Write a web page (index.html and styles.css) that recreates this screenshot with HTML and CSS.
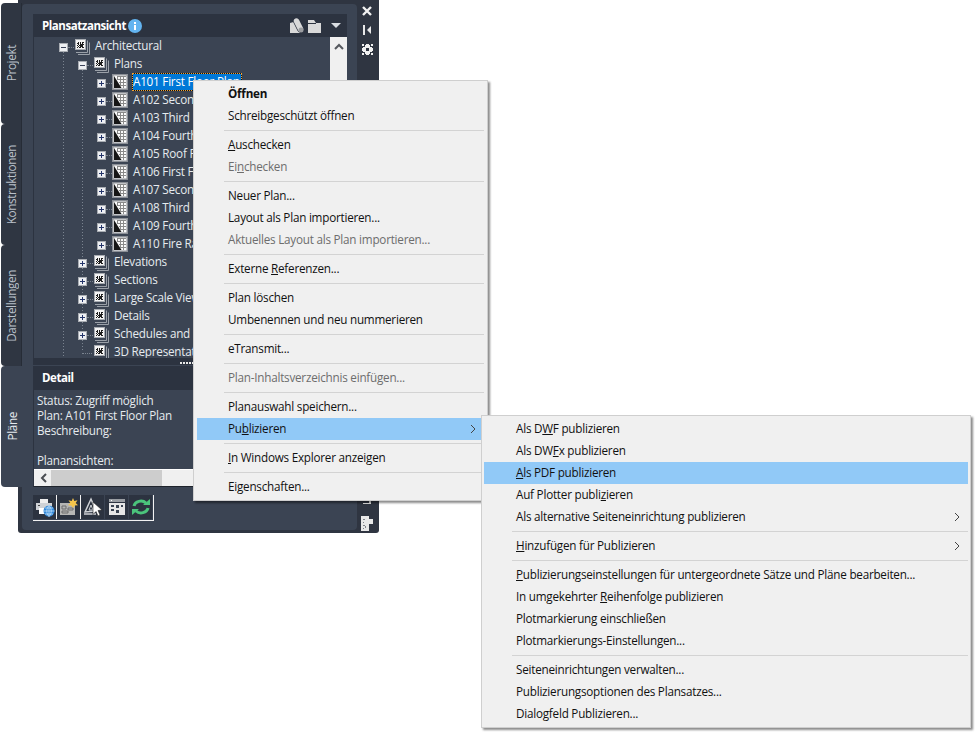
FILE: index.html
```
<!DOCTYPE html>
<html lang="de">
<head>
<meta charset="utf-8">
<title>Plansatzansicht</title>
<link rel="stylesheet" href="styles.css">
</head>
<body>
<svg class="defs" width="0" height="0" aria-hidden="true">
  <symbol id="sheetset" viewBox="0 0 17 16">
    <path d="M13.500 1.500v12H2M15.500 3.500v12H4" fill="none" stroke="#9aa0a8"/>
    <rect x="1.500" y="0.500" width="10" height="10" fill="#f4f4f4" stroke="#a8acb2"/>
    <path d="M4 3h1v1H4zM6 3h1v1H6zM8 3h2v1H8zM3 4h2v1H3zM6 4h1v1H6zM8 4h1v1H8zM4 5h1v1H4zM6 5h4v1H6zM3 6h1v1H3zM5 6h4v1H5zM4 7h1v1H4zM6 7h3v1H6zM8 8h2v1H8zM3 8h1v1H3zM5 8h2v1H5z" fill="#1d1d1d"/>
  </symbol>
  <symbol id="sheet" viewBox="0 0 16 16">
    <rect x="0.750" y="0.750" width="14.500" height="14.500" fill="#fafafa" stroke="#8b8f96" stroke-width="1.500"/>
    <path d="M2 2l7.500 12H2z" fill="#161616"/>
    <path d="M5 2.500h9M5 5.500h9M7 8.500h7M8 11.500h6M5.500 2v4M8.500 2v10M11.500 2v12" fill="none" stroke="#8a8a8a"/>
  </symbol>
</svg>

<div class="palette">
  <div class="tabs">
    <div class="tab"><span>Projekt</span></div>
    <div class="tab"><span>Konstruktionen</span></div>
    <div class="tab"><span>Darstellungen</span></div>
    <div class="tab active"><span>Pläne</span></div>
  </div>
  <div class="frame">
    <div class="inner">
      <div class="titlebar">
        <strong class="title">Plansatzansicht</strong>
        <svg class="info" width="14" height="14" viewBox="0 0 14 14"><circle cx="7" cy="7" r="7" fill="#63b4f0"/><path d="M6 3h2v2H6zM6 6h2v5H6z" fill="#fff"/></svg>
        <span class="spacer"></span>
        <svg class="bar-ico" width="32" height="16" viewBox="0 0 32 16">
          <path d="M0 5l7-2 3 12H0z" fill="#d9d9d9"/>
          <path d="M6.500 3L10.500 11" fill="none" stroke="#2c3340" stroke-width="7" stroke-linecap="round"/>
          <path d="M6.500 3L10.500 11" fill="none" stroke="#d9d9d9" stroke-width="5.500" stroke-linecap="round"/>
          <circle cx="11" cy="12" r="2.500" fill="#9b9da0"/>
          <path d="M18 2h6l2 3h5v10H18z" fill="#d9d9d9"/>
          <path d="M18 5.500h8" stroke="#2c3340"/>
        </svg>
        <svg class="caret" width="10" height="5" viewBox="0 0 10 5"><path d="M0 0h10L5 5z" fill="#d9dde2"/></svg>
      </div>
      <div class="tree">
        <svg class="guides" width="120" height="321" viewBox="0 0 120 321">
          <path d="M29.500 15v306M48.500 33v282" fill="none" stroke="#7b8490" stroke-dasharray="1 2"/>
        </svg>
        <div class="row l0"><span class="toggle minus"></span><svg class="set" width="17" height="16"><use href="#sheetset"/></svg><span class="label">Architectural</span></div>
        <div class="row l1"><span class="toggle minus"></span><svg class="set" width="17" height="16"><use href="#sheetset"/></svg><span class="label">Plans</span></div>
        <div class="row l2"><span class="toggle plus"></span><svg class="doc" width="16" height="16"><use href="#sheet"/></svg><span class="label selected">A101 First Floor Plan</span></div>
        <div class="row l2"><span class="toggle plus"></span><svg class="doc" width="16" height="16"><use href="#sheet"/></svg><span class="label">A102 Second Floor Plan</span></div>
        <div class="row l2"><span class="toggle plus"></span><svg class="doc" width="16" height="16"><use href="#sheet"/></svg><span class="label">A103 Third Floor Plan</span></div>
        <div class="row l2"><span class="toggle plus"></span><svg class="doc" width="16" height="16"><use href="#sheet"/></svg><span class="label">A104 Fourth Floor Plan</span></div>
        <div class="row l2"><span class="toggle plus"></span><svg class="doc" width="16" height="16"><use href="#sheet"/></svg><span class="label">A105 Roof Plan</span></div>
        <div class="row l2"><span class="toggle plus"></span><svg class="doc" width="16" height="16"><use href="#sheet"/></svg><span class="label">A106 First Floor Plan</span></div>
        <div class="row l2"><span class="toggle plus"></span><svg class="doc" width="16" height="16"><use href="#sheet"/></svg><span class="label">A107 Second Floor Plan</span></div>
        <div class="row l2"><span class="toggle plus"></span><svg class="doc" width="16" height="16"><use href="#sheet"/></svg><span class="label">A108 Third Floor Plan</span></div>
        <div class="row l2"><span class="toggle plus"></span><svg class="doc" width="16" height="16"><use href="#sheet"/></svg><span class="label">A109 Fourth Floor Plan</span></div>
        <div class="row l2"><span class="toggle plus"></span><svg class="doc" width="16" height="16"><use href="#sheet"/></svg><span class="label">A110 Fire Rating Plan</span></div>
        <div class="row l1"><span class="toggle plus"></span><svg class="set" width="17" height="16"><use href="#sheetset"/></svg><span class="label">Elevations</span></div>
        <div class="row l1"><span class="toggle plus"></span><svg class="set" width="17" height="16"><use href="#sheetset"/></svg><span class="label">Sections</span></div>
        <div class="row l1"><span class="toggle plus"></span><svg class="set" width="17" height="16"><use href="#sheetset"/></svg><span class="label">Large Scale Views</span></div>
        <div class="row l1"><span class="toggle plus"></span><svg class="set" width="17" height="16"><use href="#sheetset"/></svg><span class="label">Details</span></div>
        <div class="row l1"><span class="toggle plus"></span><svg class="set" width="17" height="16"><use href="#sheetset"/></svg><span class="label">Schedules and Diagrams</span></div>
        <div class="row l1"><span class="toggle none"></span><svg class="set" width="17" height="16"><use href="#sheetset"/></svg><span class="label">3D Representations</span></div>
        <div class="vscroll">
          <svg width="10" height="7" viewBox="0 0 10 7"><path d="M1 6l4-4 4 4" fill="none" stroke="#55585e" stroke-width="2"/></svg>
        </div>
      </div>
      <div class="splitter"><span class="grip"></span></div>
      <div class="titlebar detail-bar"><strong class="title">Detail</strong></div>
      <div class="detail">
        <div class="detail-text">
          <div>Status: Zugriff möglich</div>
          <div>Plan: A101 First Floor Plan</div>
          <div>Beschreibung:</div>
          <div class="blank"></div>
          <div>Planansichten:</div>
        </div>
        <div class="hscroll">
          <svg width="7" height="10" viewBox="0 0 7 10"><path d="M6 1L2 5l4 4" fill="none" stroke="#4a4d52" stroke-width="2"/></svg>
          <span class="thumb"></span>
        </div>
      </div>
      <div class="toolbar">
        <span class="tool"><svg width="20" height="20" viewBox="0 0 20 20">
          <path d="M5 2h8v4H5z" fill="#eee"/><path d="M1 6h16v7H1z" fill="#cfd2d6"/><path d="M4 11h9v6H4z" fill="#fff"/><path d="M3 8h2v1H3z" fill="#444"/>
          <circle cx="14" cy="14" r="5.500" fill="#2f86d8"/><path d="M8.500 14h11M14 8.500v11M10 11h8M10 17h8M14 8.500c-3 3-3 8 0 11M14 8.500c3 3 3 8 0 11" fill="none" stroke="#bfe0fa" stroke-width=".8"/>
        </svg></span>
        <span class="tool"><svg width="20" height="20" viewBox="0 0 20 20">
          <path d="M1 6h15v12H1z" fill="#b6b6b4"/>
          <path d="M3 9h4v3H3zM9 11h5v2H9zM3 14h6v2H3z" fill="none" stroke="#6c6c6c"/>
          <path d="M14 1l1.300 3 3.200-.800-1.800 2.800 2.300 2.300-3.300.200L14 11l-1.700-2.500-3.300-.200 2.300-2.300L9.500 3.200l3.200.800z" fill="#f6c64c"/>
        </svg></span>
        <span class="tool"><svg width="20" height="20" viewBox="0 0 20 20">
          <path d="M2 15L8 2l5 12z" fill="none" stroke="#cfd2d6" stroke-width="1.500"/><path d="M6 13l2-5 2 5z" fill="none" stroke="#cfd2d6"/><path d="M1 17h12" stroke="#cfd2d6" stroke-width="1.500"/>
          <path d="M10 5l9 8-4 .500 2 4.500-2 1-2-4.500-3 3z" fill="#fff" stroke="#222" stroke-width=".6"/>
        </svg></span>
        <span class="tool"><svg width="18" height="18" viewBox="0 0 18 18">
          <path d="M1 1h16v3H1z" fill="#9a9ea3"/><path d="M1 5h16v12H1z" fill="#e6e6e6"/><path d="M3 2h1v1H3z" fill="#fff"/>
          <path d="M3 7h3v2H3zM3 11h3v2H3zM8 7h3v3H8zM8 12h3v3H8zM13 7h2v2h-2z" fill="#3a4351"/>
        </svg></span>
        <span class="tool"><svg width="20" height="20" viewBox="0 0 20 20">
          <path d="M3 9a7 6 0 0 1 12-3" fill="none" stroke="#4bc47c" stroke-width="3"/><path d="M12 8h7V2z" fill="#4bc47c"/>
          <path d="M17 11a7 6 0 0 1-12 3" fill="none" stroke="#4bc47c" stroke-width="3"/><path d="M8 12H1v6z" fill="#4bc47c"/>
        </svg></span>
      </div>
    </div>
    <div class="strip">
      <svg width="10" height="10" viewBox="0 0 10 10"><path d="M1 1l8 8M9 1l-8 8" stroke="#f2f2f2" stroke-width="2.400"/></svg>
      <svg width="10" height="10" viewBox="0 0 10 10"><path d="M1 0h2v10H1zM9 1v8L5 5z" fill="#e8e8e8"/></svg>
      <svg width="11" height="11" viewBox="0 0 11 11"><path d="M3 1h5v9H3zM1 3h9v5H1zM0 0h2v2H0zM9 0h2v2H9zM0 9h2v2H0zM9 9h2v2H9zM4 0h3v1H4zM4 10h3v1H4zM0 4h1v3H0zM10 4h1v3h-1z" fill="#f0f0f0"/><path d="M4 4h3v3H4z" fill="#2f3541"/></svg>
      <span class="spacer"></span>
      <svg class="bottom-a" width="9" height="5" viewBox="0 0 9 5"><path d="M6 0h2v4H0V3h6z" fill="#e8e8e8"/></svg>
      <svg class="bottom-b" width="12" height="15" viewBox="0 0 12 15"><path d="M0 0h8v3h4v5H8v7H0z" fill="#e8e8e8"/><path d="M2 3h2v1H2zM2 6h1v1H2zM2 9h3v1H2zM4 9v3h1V9zM2 12h1v1H2z" fill="#7e8288"/></svg>
    </div>
  </div>
</div>

<div class="menu main-menu">
  <div class="item strong"><span>Öffnen</span></div>
  <div class="item"><span>Schreibgeschützt öffnen</span></div>
  <div class="sep"></div>
  <div class="item"><span><u>A</u>uschecken</span></div>
  <div class="item off"><span>Ei<u>n</u>checken</span></div>
  <div class="sep"></div>
  <div class="item"><span>Neuer Plan...</span></div>
  <div class="item"><span>Layout als Plan importieren...</span></div>
  <div class="item off"><span>Aktuelles Layout als Plan importieren...</span></div>
  <div class="sep"></div>
  <div class="item"><span>Externe <u>R</u>eferenzen...</span></div>
  <div class="sep"></div>
  <div class="item"><span>Plan löschen</span></div>
  <div class="item"><span>Umbenennen und neu nummerieren</span></div>
  <div class="sep"></div>
  <div class="item"><span>eTransmit...</span></div>
  <div class="sep"></div>
  <div class="item off"><span>Plan-Inhaltsverzeichnis einfügen...</span></div>
  <div class="sep"></div>
  <div class="item"><span>Planauswahl speichern...</span></div>
  <div class="item hot"><span>Pu<u>b</u>lizieren</span><svg class="chev" width="6" height="10" viewBox="0 0 6 10"><path d="M1 1l4 4-4 4" fill="none" stroke="#444"/></svg></div>
  <div class="sep"></div>
  <div class="item"><span><u>I</u>n Windows Explorer anzeigen</span></div>
  <div class="sep"></div>
  <div class="item"><span>Eigenschaften...</span></div>
</div>

<div class="menu sub-menu">
  <div class="item"><span>Als D<u>W</u>F publizieren</span></div>
  <div class="item"><span>Als DW<u>F</u>x publizieren</span></div>
  <div class="item hot"><span><u>A</u>ls PDF publizieren</span></div>
  <div class="item"><span>Auf Plotter publi<u>z</u>ieren</span></div>
  <div class="item"><span>Als alternative Seiteneinrichtung publizieren</span><svg class="chev" width="6" height="10" viewBox="0 0 6 10"><path d="M1 1l4 4-4 4" fill="none" stroke="#444"/></svg></div>
  <div class="sep"></div>
  <div class="item"><span><u>H</u>inzufügen für Publizieren</span><svg class="chev" width="6" height="10" viewBox="0 0 6 10"><path d="M1 1l4 4-4 4" fill="none" stroke="#444"/></svg></div>
  <div class="sep"></div>
  <div class="item"><span><u>P</u>ublizierungseinstellungen für untergeordnete Sätze und Pläne bearbeiten...</span></div>
  <div class="item"><span>In umgekehrter <u>R</u>eihenfolge publizieren</span></div>
  <div class="item"><span>Plotmarkierung einschließen</span></div>
  <div class="item"><span>Plotmarkierungs-Einstellungen...</span></div>
  <div class="sep"></div>
  <div class="item"><span>Seiteneinrichtungen verwalten...</span></div>
  <div class="item"><span>Publizierungsoptionen des Plansatzes...</span></div>
  <div class="item"><span>Dialogfeld Publizieren...</span></div>
</div>
</body>
</html>
```
FILE: styles.css
```
* { box-sizing: border-box; }
html, body { margin: 0; padding: 0; background: #fff; }
body {
  position: relative;
  width: 979px;
  height: 735px;
  overflow: hidden;
  font-family: "Open Sans", "Noto Sans", sans-serif;
  font-size: 11.7px;
  letter-spacing: -0.23px;
}
.defs { position: absolute; }
.palette { display: flex; align-items: flex-start; }
.spacer { flex: 1; }

.tabs {
  position: relative;
  z-index: 1;
  width: 21px;
  margin: 3px -4px 0 1px;
  display: flex;
  flex-direction: column;
}
.tab {
  height: 121px;
  background: #2f3642;
  border-radius: 4px 0 0 4px;
  border-right: 1px solid #262c36;
  color: #b9c0c9;
  display: flex;
  align-items: center;
  justify-content: center;
}
.tab span { writing-mode: vertical-rl; transform: rotate(180deg); line-height: 14px; letter-spacing: -0.35px; }
.tab.active { background: #3b4453; color: #e6eaee; border-right: 0; }

.frame {
  width: 361px;
  height: 533px;
  background: #2f3541;
  border-radius: 0 0 3px 3px;
  padding: 4px 1px 3px 4px;
  display: flex;
}
.inner {
  width: 335px;
  height: 526px;
  background: #3b4453;
  border-radius: 4px;
  padding: 10px 0 0 11px;
}
.titlebar {
  width: 314px;
  height: 23px;
  background: #2c3340;
  display: flex;
  align-items: center;
  padding: 0 6px 0 9px;
  color: #fff;
}
.title { font-size: 11.5px; font-weight: 700; letter-spacing: -0.45px; }
.info { margin-left: 2px; }
.bar-ico { margin-right: 9px; }

.tree {
  position: relative;
  width: 314px;
  height: 321px;
  overflow: hidden;
  color: #e6ebef;
  border-left: 1px solid #2c3340;
}
.guides { position: absolute; left: 0; top: 0; }
.row {
  position: relative;
  height: 18px;
  display: flex;
  align-items: center;
  white-space: nowrap;
}
.row.l0 { padding-left: 25px; }
.row.l1 { padding-left: 44px; }
.row.l2 { padding-left: 63px; }
.toggle {
  position: relative;
  flex: none;
  width: 9px;
  height: 9px;
  margin: 3px 6px 0 0;
  border: 1px solid #a9adb3;
  background-color: #eef0f3;
  background-repeat: no-repeat;
  background-position: center;
}
.toggle.minus {
  background-image: linear-gradient(#3a4258, #3a4258);
  background-size: 5px 1px;
}
.toggle.plus {
  background-image: linear-gradient(#24356a, #24356a), linear-gradient(#24356a, #24356a);
  background-size: 5px 1px, 1px 5px;
}
.toggle::after {
  content: "";
  position: absolute;
  left: 8px;
  top: 3px;
  width: 6px;
  height: 0;
  border-top: 1px dotted #7b8490;
}
.toggle.none { background: none; border-color: transparent; }
.toggle.none::after { left: 3px; width: 10px; }
.set { flex: none; align-self: flex-start; margin: 2px 4px 0 0; }
.doc { flex: none; align-self: flex-start; margin: 1px 4px 0 0; }
.label { position: relative; top: -1px; line-height: 16px; }
.doc + .label { padding-left: 1px; }
.doc + .selected {
  top: 0;
  width: 110px;
  height: 18px;
  line-height: 16px;
  background: #0078d7;
  color: #fff;
  outline: 1px dotted #f0a030;
  outline-offset: -1px;
  box-shadow: inset 0 0 0 1px #111;
}
.vscroll {
  position: absolute;
  right: 0;
  top: 0;
  width: 17px;
  height: 321px;
  background: #f0f0f0;
  display: flex;
  justify-content: center;
  padding-top: 6px;
}
.vscroll svg { display: block; }

.splitter {
  position: relative;
  width: 314px;
  height: 7px;
  background: #2c3340;
  margin-bottom: 1px;
}
.grip {
  position: absolute;
  left: 147px;
  top: 4px;
  width: 13px;
  height: 2px;
  background: repeating-linear-gradient(90deg, #e8e8e8 0 2px, transparent 2px 3px);
}
.detail-bar { height: 24px; padding-bottom: 1px; }
.detail {
  width: 314px;
  height: 97px;
  border-left: 1px solid #2c3340;
  color: #e6ebef;
  display: flex;
  flex-direction: column;
  border-bottom: 1px solid #1f242c;
}
.detail-text { flex: 1; padding: 3px 0 0 3px; line-height: 15px; }
.blank { height: 15px; }
.hscroll {
  height: 17px;
  background: #f0f0f0;
  border-top: 1px solid #fff;
  display: flex;
  align-items: center;
  padding-left: 6px;
}
.thumb {
  width: 111px;
  height: 100%;
  margin-left: 4px;
  background: #cdcdcd;
}

.toolbar {
  margin-top: 8px;
  width: 121px;
  height: 26px;
  display: flex;
  border-bottom: 1px solid #f2f2f2;
  border-right: 1px solid #f2f2f2;
}
.tool {
  width: 24px;
  height: 24px;
  background: #2c3340;
  border-right: 1px solid #3b4453;
  display: flex;
  align-items: center;
  justify-content: center;
}
.tool:nth-child(1), .tool:nth-child(2) { border-right: 1px solid #f2f2f2; }

.strip {
  width: 20px;
  height: 526px;
  display: flex;
  flex-direction: column;
  align-items: center;
  gap: 9px;
  padding-top: 2px;
}
.strip svg { flex: none; }
.bottom-a { margin-bottom: 2px; }
.bottom-b { margin-bottom: -1px; }

.menu {
  position: absolute;
  background: #f0f0f0;
  border: 1px solid #cfcfcf;
  padding-top: 2px;
  color: #111;
  white-space: nowrap;
  box-shadow: 2px 2px 2px rgba(0, 0, 0, .45);
}
.main-menu { left: 193px; top: 80px; width: 295px; height: 421px; padding-left: 3px; padding-right: 3px; z-index: 2; }
.sub-menu { left: 481px; top: 415px; width: 490px; height: 313px; padding-left: 2px; padding-right: 2px; z-index: 3; }
.item {
  height: 22px;
  display: flex;
  align-items: center;
  justify-content: space-between;
  padding: 0 8px 0 31px;
}
.sub-menu .item { padding-left: 32px; }
.item span { position: relative; top: -1px; }
.item.strong { font-weight: 700; }
.item.off { color: #6d6d6d; }
.item.hot { background: #91c9f7; }
.sep { height: 7px; padding-top: 3px; margin-left: 27px; }
.sep::before { content: ""; display: block; height: 1px; background: #d3d3d3; }
.sub-menu .sep { margin-left: 28px; }
```
